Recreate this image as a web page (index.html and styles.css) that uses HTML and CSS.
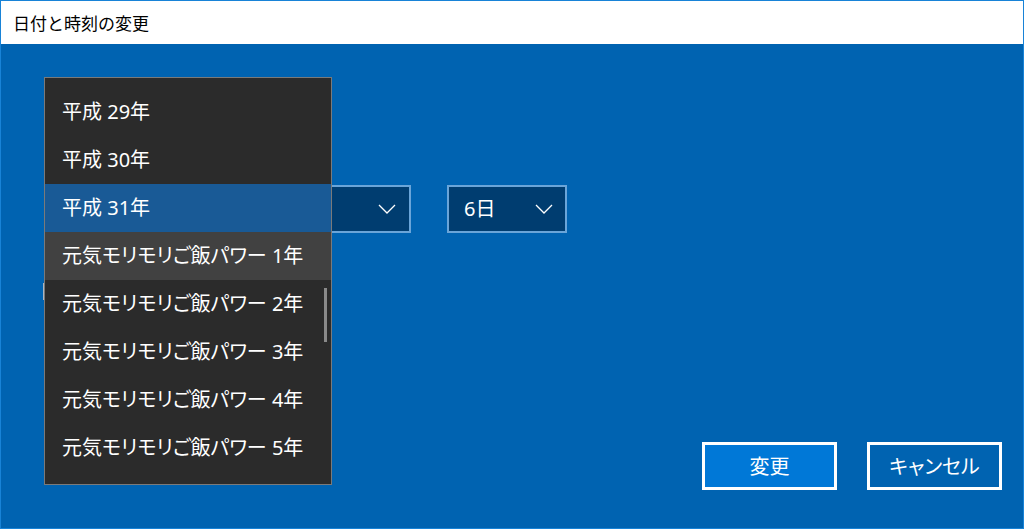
FILE: index.html
```html
<!DOCTYPE html>
<html lang="ja">
<head>
<meta charset="utf-8">
<title>日付と時刻の変更</title>
<link rel="stylesheet" href="styles.css">
</head>
<body>
<div class="window">
  <div class="titlebar">日付と時刻の変更</div>
  <div class="content">
    <div class="date-row">
      <div class="combo combo-year"><span>平成 31年</span><svg class="chev" width="18" height="10" viewBox="0 0 18 10"><polyline points="1,1 9,9 17,1"/></svg></div>
      <div class="combo combo-day"><span>6日</span><svg class="chev" width="18" height="10" viewBox="0 0 18 10"><polyline points="1,1 9,9 17,1"/></svg></div>
    </div>
    <div class="time-row"><div class="time-box"></div></div>
    <div class="buttons">
      <div class="btn btn-primary">変更</div>
      <div class="btn">キャンセル</div>
    </div>
  </div>
  <div class="popup">
    <div class="item">平成 29年</div>
    <div class="item">平成 30年</div>
    <div class="item selected">平成 31年</div>
    <div class="item hover">元気モリモリご飯パワー 1年</div>
    <div class="item">元気モリモリご飯パワー 2年</div>
    <div class="item">元気モリモリご飯パワー 3年</div>
    <div class="item">元気モリモリご飯パワー 4年</div>
    <div class="item">元気モリモリご飯パワー 5年</div>
    <div class="thumb"></div>
  </div>
</div>
</body>
</html>
```

FILE: styles.css
```css
html, body {
  margin: 0;
  padding: 0;
  background: #0063b1;
}
body {
  font-family: "Noto Sans", "Noto Sans CJK JP", sans-serif;
  font-feature-settings: "palt";
}
.window {
  position: relative;
  width: 1024px;
  height: 529px;
  box-sizing: border-box;
  border: 1px solid #1883d7;
  display: flex;
  flex-direction: column;
  overflow: hidden;
}
.titlebar {
  height: 43px;
  flex: none;
  background: #ffffff;
  color: #000000;
  font-size: 17px;
  display: flex;
  align-items: center;
  padding-left: 12px;
  font-feature-settings: normal;
}
.content {
  flex: 1;
  background: #0063b1;
  display: flex;
  flex-direction: column;
  padding: 141px 21px 38px 43px;
}
.date-row {
  display: flex;
  gap: 36px;
}
.combo {
  height: 48px;
  box-sizing: border-box;
  border: 2px solid #6aa5d9;
  background: #003d70;
  color: #ffffff;
  font-size: 20px;
  display: flex;
  align-items: center;
  justify-content: space-between;
  padding: 0 13px 0 15px;
}
.combo span {
  padding-bottom: 4px;
}
.combo-year { width: 367px; }
.combo-day { width: 120px; padding-right: 12px; }
.chev polyline {
  fill: none;
  stroke: #ffffff;
  stroke-width: 1.3;
}
.time-row {
  margin-top: 50px;
  margin-left: -1px;
}
.time-box {
  width: 100px;
  height: 17px;
  border-left: 2px solid #aab6c2;
}
.buttons {
  margin-top: auto;
  display: flex;
  justify-content: flex-end;
  gap: 30px;
}
.btn {
  width: 135px;
  height: 48px;
  box-sizing: border-box;
  border: 3px solid #ffffff;
  color: #ffffff;
  font-size: 20px;
  display: flex;
  align-items: center;
  justify-content: center;
  padding-bottom: 2px;
}
.btn-primary {
  background: #0078d7;
}
.popup {
  position: absolute;
  left: 43px;
  top: 76px;
  width: 286px;
  border: 1px solid #7a7a7a;
  background: #2b2b2b;
  padding: 10px 0 12px;
}
.item {
  height: 48px;
  box-sizing: border-box;
  display: flex;
  align-items: center;
  padding-left: 17px;
  padding-bottom: 4px;
  color: #ffffff;
  font-size: 20px;
  white-space: nowrap;
}
.item.selected {
  background: #195a96;
}
.item.hover {
  background: #414141;
}
.thumb {
  position: absolute;
  left: 279px;
  top: 210px;
  width: 3px;
  height: 54px;
  background: #8a8a8a;
}
```
